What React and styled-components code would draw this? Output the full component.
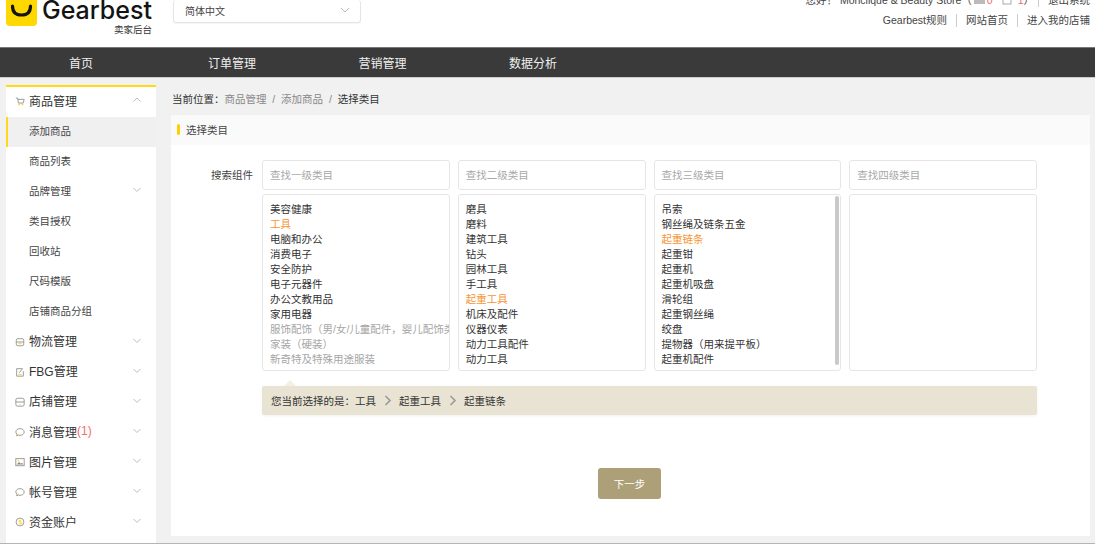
import React from "react";
import styled, { createGlobalStyle } from "styled-components";

const GlobalStyle = createGlobalStyle`
  html, body {
    margin: 0;
    padding: 0;
    height: 544px;
    overflow: hidden;
    background: #f1f1f1;
    font-family: "Liberation Sans", "Noto Sans CJK SC", sans-serif;
    color: #333;
    text-spacing-trim: space-all;
  }
`;

const Page = styled.div`
  width: 1095px;
  height: 544px;
  overflow: hidden;
  border-bottom: 1px solid #b5b5b5;
  box-sizing: border-box;
`;

// Header: the page is slightly scrolled, so its top is cut off
const Header = styled.header`
  height: 47px;
  background: #fff;
  overflow: hidden;
  display: flex;
  padding: 0 5px 0 6px;
  box-sizing: border-box;
`;

const LogoBlock = styled.div`
  width: 146px;
  display: flex;
  flex-direction: column;
  margin-top: -5px;
`;

const LogoRow = styled.div`
  display: flex;
  align-items: center;
  gap: 5px;
  height: 31px;
`;

const LogoWord = styled.span`
  font-family: Inter, sans-serif;
  font-size: 25px;
  font-weight: 500;
  letter-spacing: 0;
  line-height: 28px;
  margin-top: -1px;
  color: #141414;
`;

const LogoSub = styled.div`
  text-align: right;
  font-size: 9.5px;
  line-height: 12px;
  margin-top: -2px;
  color: #333;
`;

const LangSelect = styled.div`
  width: 188px;
  height: 23px;
  margin: 0 0 0 21px;
  border: 1px solid #e4e4e4;
  border-top: none;
  border-radius: 3px;
  padding: 0 10px 2px 11px;
  box-sizing: border-box;
  display: flex;
  align-items: center;
  justify-content: space-between;
  font-size: 10px;
  color: #444;
  box-shadow: 0 1px 1px rgba(0, 0, 0, 0.04);
`;

const HeaderRight = styled.div`
  margin-left: auto;
  display: flex;
  flex-direction: column;
  align-items: flex-end;
  margin-top: -7px;
  gap: 7px;
  font-size: 10.5px;
  line-height: 14px;
  color: #444;
`;

const HeaderLine = styled.div`
  display: flex;
  align-items: center;
  white-space: pre;
`;

const HeaderLink = styled.span`
  padding: 0 9px;
  border-left: ${(p) => (p.$first ? "none" : "1px solid #ccc")};
  line-height: 13px;
  &:last-child {
    padding-right: 0;
  }
`;

const LogoutLink = styled(HeaderLink)`
  margin-left: 4px;
`;

const Red = styled.span`
  color: #f06a6a;
  margin: 0 ${(p) => p.$mr}px 0 ${(p) => p.$ml}px;
`;

const MailIcon = styled.svg`
  width: 13px;
  height: 10px;
  margin-left: 1px;
`;

const NavBar = styled.nav`
  height: 31px;
  background: #3a3a3a;
  border-top: 1px solid #777;
  border-bottom: 1px solid #ccc;
  box-sizing: border-box;
  display: flex;
  align-items: center;
  color: #f0f0f0;
  font-size: 12px;
`;

const NavItem = styled.span`
  width: ${(p) => p.$w}px;
  flex: none;
  text-align: center;
  white-space: nowrap;
`;

const Layout = styled.div`
  display: flex;
  align-items: flex-start;
  padding: 7px 5px 0 6px;
  gap: 15px;
`;

const Sidebar = styled.aside`
  width: 150px;
  flex: none;
  height: 470px;
  background: #fff;
  border-top: 2px solid #ffd91a;
`;

const SideRow = styled.div`
  height: 30.1px;
  display: flex;
  align-items: center;
  box-sizing: border-box;
  padding: 0 15px 4px ${(p) => (p.$active ? "21px" : "23px")};
  font-size: ${(p) => (p.$sub ? "10.5px" : "12px")};
  color: ${(p) => (p.$sub ? "#444" : "#333")};
  background: ${(p) => (p.$active ? "#f0f0f0" : "transparent")};
  border-left: ${(p) => (p.$active ? "2px solid #ffd91a" : "none")};
  position: relative;
`;

const SideIcon = styled.svg`
  position: absolute;
  left: 9px;
  top: 9px;
  width: 10px;
  height: 10px;
`;

const SideArrow = styled.svg`
  margin-left: auto;
  width: 8px;
  height: 6px;
`;

const Count = styled.span`
  color: #f26d6d;
`;

const Main = styled.main`
  flex: 1;
  min-width: 0;
`;

const Crumbs = styled.div`
  height: 30px;
  box-sizing: border-box;
  display: flex;
  align-items: center;
  padding: 0 0 4px 1px;
  font-size: 10.5px;
  color: #888;
  white-space: pre;
`;

const CrumbStrong = styled.span`
  color: #333;
`;

const Card = styled.section`
  height: 421px;
  background: #fff;
`;

const CardTitle = styled.div`
  height: 30px;
  box-sizing: border-box;
  background: #fafafa;
  display: flex;
  align-items: center;
  gap: 6px;
  padding: 0 0 2px 6px;
  font-size: 10.5px;
  color: #444;
`;

const TitleMark = styled.span`
  width: 3px;
  height: 11px;
  border-radius: 2px;
  background: #ffd000;
`;

const CardBody = styled.div`
  display: flex;
  padding: 15px 53px 0 0;
  gap: 9px;
`;

const FieldLabel = styled.div`
  width: 82px;
  flex: none;
  text-align: right;
  font-size: 10.5px;
  line-height: 30px;
  color: #444;
`;

const Picker = styled.div`
  flex: 1;
  min-width: 0;
`;

const Columns = styled.div`
  display: grid;
  grid-template-columns: repeat(4, 1fr);
  column-gap: 8px;
  row-gap: 4px;
`;

const SearchBox = styled.div`
  height: 30px;
  box-sizing: border-box;
  border: 1px solid #e6e6e6;
  border-radius: 3px;
  padding-left: 7px;
  font-size: 10.5px;
  line-height: 28px;
  color: #a8a8a8;
`;

const ListBox = styled.div`
  height: 177px;
  box-sizing: border-box;
  border: 1px solid #e6e6e6;
  border-radius: 3px;
  padding: 7px 0 0 7px;
  overflow: hidden;
  position: relative;
`;

const ListItem = styled.div`
  font-size: 10.5px;
  line-height: 15px;
  white-space: nowrap;
  color: ${(p) =>
    p.$selected ? "#f79433" : p.$muted ? "#a6a6a6" : "#333"};
`;

const ScrollThumb = styled.span`
  position: absolute;
  right: 1px;
  top: 1px;
  width: 4px;
  height: 169px;
  border-radius: 2px;
  background: #c9c9c9;
`;

const PathBar = styled.div`
  position: relative;
  margin-top: 15px;
  height: 29px;
  background: #e9e3d3;
  border-radius: 2px;
  display: flex;
  align-items: center;
  padding-left: 9px;
  font-size: 10.5px;
  color: #333;
  box-shadow: 0 1px 3px rgba(0, 0, 0, 0.06);
  &::before {
    content: "";
    position: absolute;
    left: 22px;
    top: -6px;
    border-left: 6px solid transparent;
    border-right: 6px solid transparent;
    border-bottom: 6px solid #f3efe4;
  }
`;

const PathSep = styled.svg`
  width: 8px;
  height: 11px;
  margin: 0 7.5px;
`;

const ButtonRow = styled.div`
  display: flex;
  margin: 53px 0 0 336px;
`;

const NextButton = styled.button`
  width: 63px;
  height: 31px;
  border: none;
  border-radius: 3px;
  background: #ada078;
  color: #fff;
  font-family: inherit;
  font-size: 10.5px;
  padding: 0;
`;

const Chevron = ({ up }) => (
  <SideArrow viewBox="0 0 8 6">
    <path
      d={up ? "M0.5 4.500l3.500-3.500 3.500 3.500" : "M0.500 1l3.500 3.500L7.500 1"}
      fill="none"
      stroke="#bdbdbd"
      strokeWidth="1"
    />
  </SideArrow>
);

const Y = "#ffd000";
const G = "#8a8a8a";

const icons = {
  cart: (
    <>
      <path d="M1 2.500h2l1.200 6h5.600L11 4H3.500" fill="none" stroke={G} />
      <circle cx="5" cy="10.300" r="1" fill={Y} />
      <circle cx="9" cy="10.300" r="1" fill={Y} />
    </>
  ),
  truck: (
    <>
      <rect x="1.500" y="2" width="9" height="8.500" rx="2" fill="none" stroke={G} />
      <path d="M1.500 6h9" stroke={G} />
      <path d="M4 8h4" stroke={Y} />
    </>
  ),
  note: (
    <>
      <path d="M9 2H2v9h8V5" fill="none" stroke={G} />
      <path d="M5 7l4-5" stroke={G} />
      <path d="M4 9h4" stroke={Y} />
    </>
  ),
  store: (
    <>
      <rect x="1" y="1.500" width="10" height="9.500" rx="2" fill="none" stroke={G} />
      <path d="M1 6h10" stroke={G} />
      <path d="M6 8v1.500" stroke={Y} />
    </>
  ),
  chat: (
    <>
      <path
        d="M6 2c2.800 0 5 1.500 5 4s-2.200 4-5 4c-.8 0-1.500-.1-2-.3L2 10.500l.4-2C1.500 7.800 1 7 1 6c0-2.500 2.200-4 5-4z"
        fill="none"
        stroke={G}
      />
      <path d="M3 9l2-.5" stroke={Y} />
    </>
  ),
  image: (
    <>
      <rect x="1" y="2" width="10" height="8.500" fill="none" stroke={G} />
      <path d="M2 9l3-3 2 2 1.500-1L10 9z" fill={G} />
      <circle cx="4" cy="4.500" r="1" fill={Y} />
    </>
  ),
  coin: (
    <>
      <circle cx="6" cy="6" r="4.700" fill="none" stroke={G} />
      <path d="M7.500 4H5v2h2.500v2.200H4.700" fill="none" stroke={Y} />
    </>
  ),
};

const SideItem = ({ icon, label, count, arrow, up, sub, active }) => (
  <SideRow $sub={sub} $active={active}>
    {icon && <SideIcon viewBox="0 0 12 12">{icons[icon]}</SideIcon>}
    {label}
    {count && <Count>{count}</Count>}
    {arrow && <Chevron up={up} />}
  </SideRow>
);

const Logo = () => (
  <svg width="31" height="31" viewBox="0 0 31 31">
    <rect width="31" height="31" rx="4" fill="#ffd800" />
    <path
      d="M6.500 11c0 6 3.500 9 9 9s9-3 9-9"
      fill="none"
      stroke="#141414"
      strokeWidth="3.200"
      strokeLinecap="round"
    />
  </svg>
);

const Sep = () => (
  <PathSep viewBox="0 0 8 11">
    <path d="M1.500 1l4.500 4.500L1.500 10" fill="none" stroke="#999" strokeWidth="1.600" />
  </PathSep>
);

const sideMenu = [
  { icon: "cart", label: "商品管理", arrow: true, up: true },
  { label: "添加商品", sub: true, active: true },
  { label: "商品列表", sub: true },
  { label: "品牌管理", sub: true, arrow: true },
  { label: "类目授权", sub: true },
  { label: "回收站", sub: true },
  { label: "尺码模版", sub: true },
  { label: "店铺商品分组", sub: true },
  { icon: "truck", label: "物流管理", arrow: true },
  { icon: "note", label: "FBG管理", arrow: true },
  { icon: "store", label: "店铺管理", arrow: true },
  { icon: "chat", label: "消息管理", count: "(1)", arrow: true },
  { icon: "image", label: "图片管理", arrow: true },
  { icon: "chat", label: "帐号管理", arrow: true },
  { icon: "coin", label: "资金账户", arrow: true },
];

const columns = [
  {
    placeholder: "查找一级类目",
    items: [
      { t: "美容健康" },
      { t: "工具", selected: true },
      { t: "电脑和办公" },
      { t: "消费电子" },
      { t: "安全防护" },
      { t: "电子元器件" },
      { t: "办公文教用品" },
      { t: "家用电器" },
      { t: "服饰配饰（男/女/儿童配件，婴儿配饰类）", muted: true },
      { t: "家装（硬装）", muted: true },
      { t: "新奇特及特殊用途服装", muted: true },
    ],
  },
  {
    placeholder: "查找二级类目",
    items: [
      { t: "磨具" },
      { t: "磨料" },
      { t: "建筑工具" },
      { t: "钻头" },
      { t: "园林工具" },
      { t: "手工具" },
      { t: "起重工具", selected: true },
      { t: "机床及配件" },
      { t: "仪器仪表" },
      { t: "动力工具配件" },
      { t: "动力工具" },
    ],
  },
  {
    placeholder: "查找三级类目",
    scroll: true,
    items: [
      { t: "吊索" },
      { t: "钢丝绳及链条五金" },
      { t: "起重链条", selected: true },
      { t: "起重钳" },
      { t: "起重机" },
      { t: "起重机吸盘" },
      { t: "滑轮组" },
      { t: "起重钢丝绳" },
      { t: "绞盘" },
      { t: "提物器（用来提平板）" },
      { t: "起重机配件" },
    ],
  },
  { placeholder: "查找四级类目", items: [] },
];

const App = () => (
  <Page>
    <GlobalStyle />
    <Header>
      <LogoBlock>
        <LogoRow>
          <Logo />
          <LogoWord>Gearbest</LogoWord>
        </LogoRow>
        <LogoSub>卖家后台</LogoSub>
      </LogoBlock>
      <LangSelect>
        简体中文
        <svg width="10" height="6" viewBox="0 0 10 6">
          <path d="M1 1l4 4 4-4" fill="none" stroke="#bbb" />
        </svg>
      </LangSelect>
      <HeaderRight>
        <HeaderLine>
          您好！ Monclique &amp; Beauty Store（
          <MailIcon viewBox="0 0 13 10">
            <rect x="1" y="1" width="11" height="8" fill="#bbb" />
          </MailIcon>
          <Red $ml={1} $mr={9}>0</Red>
          <svg width="10" height="10" viewBox="0 0 10 10">
            <rect x="1" y="1" width="8" height="8" fill="none" stroke="#aaa" />
          </svg>
          <Red $ml={6} $mr={0}>1</Red>）
          <LogoutLink>退出系统</LogoutLink>
        </HeaderLine>
        <HeaderLine>
          <HeaderLink $first>Gearbest规则</HeaderLink>
          <HeaderLink>网站首页</HeaderLink>
          <HeaderLink>进入我的店铺</HeaderLink>
        </HeaderLine>
      </HeaderRight>
    </Header>

    <NavBar>
      <NavItem $w={162}>首页</NavItem>
      <NavItem $w={140}>订单管理</NavItem>
      <NavItem $w={161}>营销管理</NavItem>
      <NavItem $w={140}>数据分析</NavItem>
    </NavBar>

    <Layout>
      <Sidebar>
        {sideMenu.map((item) => (
          <SideItem key={item.label} {...item} />
        ))}
      </Sidebar>
      <Main>
        <Crumbs>
          <CrumbStrong>当前位置：</CrumbStrong>
          商品管理  /  添加商品  /  <CrumbStrong>选择类目</CrumbStrong>
        </Crumbs>
        <Card>
          <CardTitle>
            <TitleMark />
            选择类目
          </CardTitle>
          <CardBody>
            <FieldLabel>搜索组件</FieldLabel>
            <Picker>
              <Columns>
                {columns.map((c) => (
                  <SearchBox key={c.placeholder}>{c.placeholder}</SearchBox>
                ))}
                {columns.map((c) => (
                  <ListBox key={c.placeholder}>
                    {c.items.map((it) => (
                      <ListItem key={it.t} $selected={it.selected} $muted={it.muted}>
                        {it.t}
                      </ListItem>
                    ))}
                    {c.scroll && <ScrollThumb />}
                  </ListBox>
                ))}
              </Columns>
              <PathBar>
                您当前选择的是：工具
                <Sep />
                起重工具
                <Sep />
                起重链条
              </PathBar>
              <ButtonRow>
                <NextButton>下一步</NextButton>
              </ButtonRow>
            </Picker>
          </CardBody>
        </Card>
      </Main>
    </Layout>
  </Page>
);

export default App;
